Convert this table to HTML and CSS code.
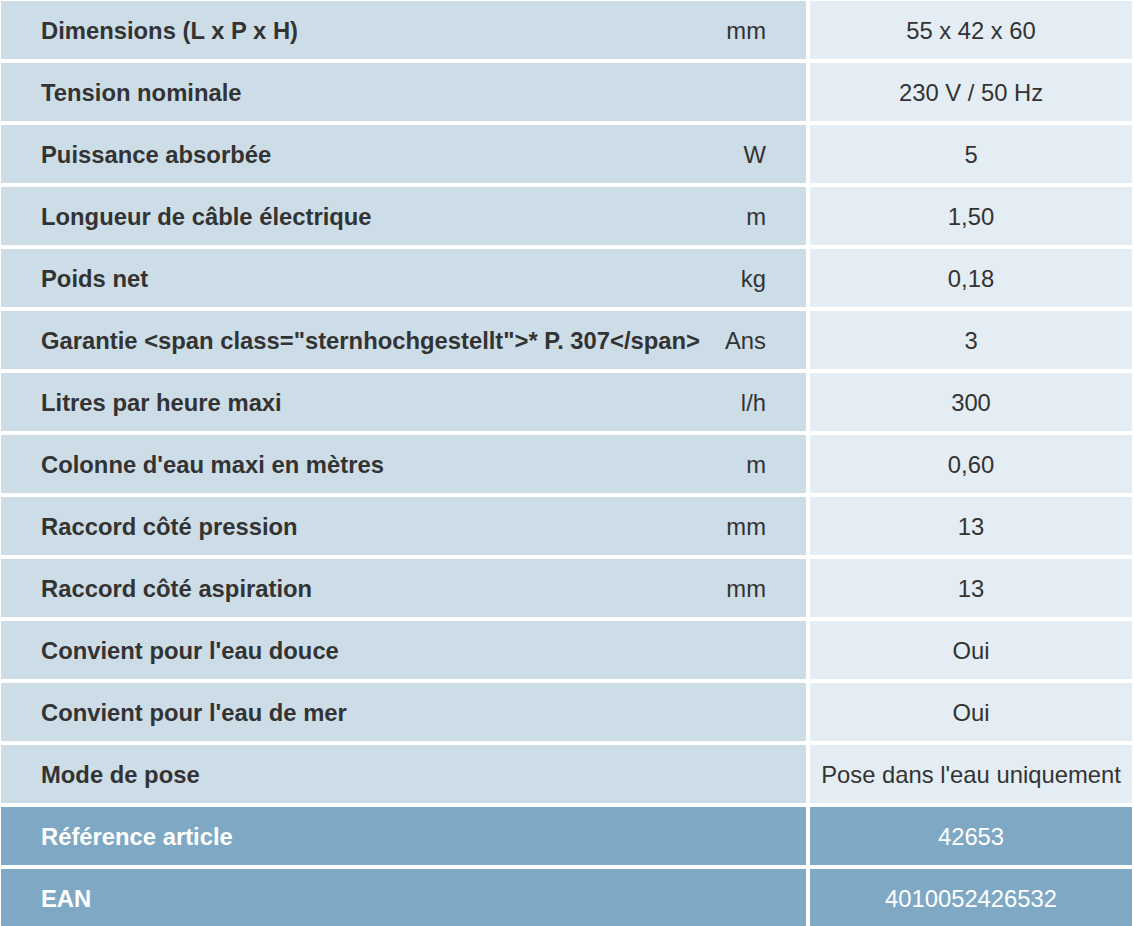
FILE: index.html
```html
<!DOCTYPE html>
<html lang="fr">
<head>
<meta charset="utf-8">
<title>Caractéristiques</title>
<link rel="stylesheet" href="styles.css">
</head>
<body>
<div class="specs">
  <div class="row"><div class="name"><span class="label">Dimensions (L x P x H)</span><span class="unit">mm</span></div><div class="value">55 x 42 x 60</div></div>
  <div class="row"><div class="name"><span class="label">Tension nominale</span><span class="unit"></span></div><div class="value">230 V / 50 Hz</div></div>
  <div class="row"><div class="name"><span class="label">Puissance absorbée</span><span class="unit">W</span></div><div class="value">5</div></div>
  <div class="row"><div class="name"><span class="label">Longueur de câble électrique</span><span class="unit">m</span></div><div class="value">1,50</div></div>
  <div class="row"><div class="name"><span class="label">Poids net</span><span class="unit">kg</span></div><div class="value">0,18</div></div>
  <div class="row"><div class="name"><span class="label">Garantie &lt;span class="sternhochgestellt"&gt;* P. 307&lt;/span&gt;</span><span class="unit">Ans</span></div><div class="value">3</div></div>
  <div class="row"><div class="name"><span class="label">Litres par heure maxi</span><span class="unit">l/h</span></div><div class="value">300</div></div>
  <div class="row"><div class="name"><span class="label">Colonne d'eau maxi en mètres</span><span class="unit">m</span></div><div class="value">0,60</div></div>
  <div class="row"><div class="name"><span class="label">Raccord côté pression</span><span class="unit">mm</span></div><div class="value">13</div></div>
  <div class="row"><div class="name"><span class="label">Raccord côté aspiration</span><span class="unit">mm</span></div><div class="value">13</div></div>
  <div class="row"><div class="name"><span class="label">Convient pour l'eau douce</span><span class="unit"></span></div><div class="value">Oui</div></div>
  <div class="row"><div class="name"><span class="label">Convient pour l'eau de mer</span><span class="unit"></span></div><div class="value">Oui</div></div>
  <div class="row"><div class="name"><span class="label">Mode de pose</span><span class="unit"></span></div><div class="value">Pose dans l'eau uniquement</div></div>
  <div class="row head"><div class="name"><span class="label">Référence article</span><span class="unit"></span></div><div class="value">42653</div></div>
  <div class="row head"><div class="name"><span class="label">EAN</span><span class="unit"></span></div><div class="value">4010052426532</div></div>
</div>
</body>
</html>
```

FILE: styles.css
```css
html, body {
  margin: 0;
  padding: 0;
  background: #ffffff;
}
body {
  font-family: "Liberation Sans", Arial, Helvetica, sans-serif;
  font-size: 23.8px;
  color: #333333;
}
.specs {
  display: flex;
  flex-direction: column;
  gap: 4px;
  padding: 1px 2px 0 1px;
}
.row {
  display: grid;
  grid-template-columns: 805px 1fr;
  column-gap: 4px;
  height: 58px;
}
.name {
  display: flex;
  align-items: center;
  justify-content: space-between;
  background: #cddde8;
  padding: 2px 40px 0 40px;
}
.label {
  font-weight: bold;
}
.value {
  display: flex;
  align-items: center;
  justify-content: center;
  background: #e4edf3;
  padding-top: 2px;
}
.row.head .name,
.row.head .value {
  background: #7fa8c4;
  color: #ffffff;
}
```
